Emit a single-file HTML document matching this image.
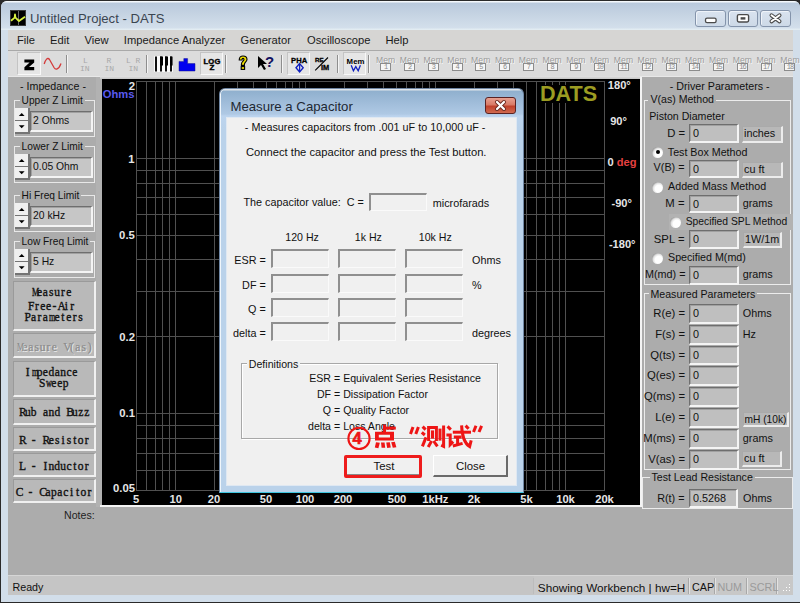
<!DOCTYPE html><html><head><meta charset="utf-8"><title>DATS</title><style>*{margin:0;padding:0}html,body{width:800px;height:603px;overflow:hidden;background:#2a2a2a}
.t{position:absolute;white-space:pre;font-family:"Liberation Sans",sans-serif}</style></head><body><div style="position:absolute;left:0;top:0;width:800px;height:603px;background:#2a2a2a"></div>
<div style="position:absolute;left:1px;top:1px;width:799px;height:601px;background:#d2deea;border-radius:6px 6px 0 0"></div>
<div style="position:absolute;left:1px;top:1px;width:799px;height:29px;background:linear-gradient(#f4f8fb 0px,#f4f8fb 1px,#b9c9dc 2px,#c6d4e3 14px,#d3dfeb 27px,#e2ecf2 28px,#e2ecf2 30px);border-radius:6px 6px 0 0"></div>
<svg style="position:absolute;left:10px;top:10px" width="16" height="16" viewBox="0 0 16 16">
<rect x="0.5" y="0.5" width="15" height="15" fill="#000" stroke="#3a3a3a" stroke-width="1"/><line x1="8.5" y1="1" x2="8.5" y2="15" stroke="#6a6a6a" stroke-width="1"/>
<polyline points="1,10.7 4.7,7.6 5,4.4 5.4,7.6 9,11 15,6.7" fill="none" stroke="#d8f040" stroke-width="1.8" stroke-linejoin="round"/></svg>
<div class="t" style="left:30.0px;top:12.1px;font-size:13.1px;line-height:13.1px;color:#3b4550;font-weight:normal;font-family:'Liberation Sans', sans-serif;">Untitled Project - DATS</div>
<div style="position:absolute;left:695px;top:10px;width:31px;height:17px;box-sizing:border-box;border:1px solid #8494ab;border-radius:3px;background:linear-gradient(#d9e3ef,#cdd9e7);box-shadow:inset 1px 1px 0 #eef3f9"></div>
<div style="position:absolute;left:728px;top:10px;width:30px;height:17px;box-sizing:border-box;border:1px solid #8494ab;border-radius:3px;background:linear-gradient(#d9e3ef,#cdd9e7);box-shadow:inset 1px 1px 0 #eef3f9"></div>
<div style="position:absolute;left:760px;top:10px;width:31px;height:17px;box-sizing:border-box;border:1px solid #8494ab;border-radius:3px;background:linear-gradient(#d9e3ef,#cdd9e7);box-shadow:inset 1px 1px 0 #eef3f9"></div>
<svg style="position:absolute;left:0;top:0" width="800" height="30">
<rect x="705.5" y="18.2" width="10.6" height="4.4" rx="1.6" fill="#fff" stroke="#4a4a4a" stroke-width="1.3"/>
<rect x="737.4" y="14.6" width="11.2" height="7.4" rx="1.4" fill="#fff" stroke="#4a4a4a" stroke-width="1.4"/>
<rect x="740.6" y="17.2" width="4.8" height="2.4" fill="#4a4a4a"/>
<path d="M771.5,15.3 L779.5,21.3 M779.5,15.3 L771.5,21.3" stroke="#4a4a4a" stroke-width="4" stroke-linecap="round"/>
<path d="M771.5,15.3 L779.5,21.3 M779.5,15.3 L771.5,21.3" stroke="#fff" stroke-width="1.9" stroke-linecap="round"/>
</svg>
<div style="position:absolute;left:8px;top:30px;width:785px;height:20px;background:#d6d5d3"></div>
<div style="position:absolute;left:8px;top:50px;width:785px;height:1px;background:#a9a9a9"></div>
<div class="t" style="left:17.0px;top:34.5px;font-size:11.2px;line-height:11.2px;color:#1a1a1a;font-weight:normal;font-family:'Liberation Sans', sans-serif;">File</div>
<div class="t" style="left:50.0px;top:34.5px;font-size:11.2px;line-height:11.2px;color:#1a1a1a;font-weight:normal;font-family:'Liberation Sans', sans-serif;">Edit</div>
<div class="t" style="left:84.5px;top:34.5px;font-size:11.2px;line-height:11.2px;color:#1a1a1a;font-weight:normal;font-family:'Liberation Sans', sans-serif;">View</div>
<div class="t" style="left:123.8px;top:34.5px;font-size:11.2px;line-height:11.2px;color:#1a1a1a;font-weight:normal;font-family:'Liberation Sans', sans-serif;">Impedance Analyzer</div>
<div class="t" style="left:240.5px;top:34.5px;font-size:11.2px;line-height:11.2px;color:#1a1a1a;font-weight:normal;font-family:'Liberation Sans', sans-serif;">Generator</div>
<div class="t" style="left:307.0px;top:34.5px;font-size:11.2px;line-height:11.2px;color:#1a1a1a;font-weight:normal;font-family:'Liberation Sans', sans-serif;">Oscilloscope</div>
<div class="t" style="left:385.5px;top:34.5px;font-size:11.2px;line-height:11.2px;color:#1a1a1a;font-weight:normal;font-family:'Liberation Sans', sans-serif;">Help</div>
<div style="position:absolute;left:8px;top:51px;width:785px;height:25px;background:#dcdcdc"></div>
<div style="position:absolute;left:8px;top:76px;width:785px;height:1px;background:#e8e8e8"></div>
<div style="position:absolute;left:66px;top:55px;width:1px;height:18px;background:#8e8e8e"></div>
<div style="position:absolute;left:67px;top:55px;width:1px;height:18px;background:#f4f4f4"></div>
<div style="position:absolute;left:146px;top:55px;width:1px;height:18px;background:#8e8e8e"></div>
<div style="position:absolute;left:147px;top:55px;width:1px;height:18px;background:#f4f4f4"></div>
<div style="position:absolute;left:225px;top:55px;width:1px;height:18px;background:#8e8e8e"></div>
<div style="position:absolute;left:226px;top:55px;width:1px;height:18px;background:#f4f4f4"></div>
<div style="position:absolute;left:281px;top:55px;width:1px;height:18px;background:#8e8e8e"></div>
<div style="position:absolute;left:282px;top:55px;width:1px;height:18px;background:#f4f4f4"></div>
<div style="position:absolute;left:337px;top:55px;width:1px;height:18px;background:#8e8e8e"></div>
<div style="position:absolute;left:338px;top:55px;width:1px;height:18px;background:#f4f4f4"></div>
<div style="position:absolute;left:368px;top:55px;width:1px;height:18px;background:#8e8e8e"></div>
<div style="position:absolute;left:369px;top:55px;width:1px;height:18px;background:#f4f4f4"></div>
<div style="position:absolute;left:17px;top:52px;width:24px;height:23px;background:#e6e6e6;border-top:1px solid #c4c4c4;border-left:1px solid #c4c4c4;border-right:1px solid #f8f8f8;border-bottom:1px solid #f8f8f8;box-sizing:border-box"></div>
<div style="position:absolute;left:200px;top:52px;width:23px;height:23px;background:#e6e6e6;border-top:1px solid #c4c4c4;border-left:1px solid #c4c4c4;border-right:1px solid #f8f8f8;border-bottom:1px solid #f8f8f8;box-sizing:border-box"></div>
<div style="position:absolute;left:287px;top:52px;width:23px;height:23px;background:#e6e6e6;border-top:1px solid #c4c4c4;border-left:1px solid #c4c4c4;border-right:1px solid #f8f8f8;border-bottom:1px solid #f8f8f8;box-sizing:border-box"></div>
<div style="position:absolute;left:343px;top:52px;width:23px;height:23px;background:#e6e6e6;border-top:1px solid #c4c4c4;border-left:1px solid #c4c4c4;border-right:1px solid #f8f8f8;border-bottom:1px solid #f8f8f8;box-sizing:border-box"></div>
<svg style="position:absolute;left:0;top:0" width="100" height="80">
<path d="M24.4,59.4 H34.2 V62.4 L29,67 H34.2 V70.2 H24.4 V67.2 L29.6,62.6 H24.4 Z" fill="#000"/>
<path d="M44.2,64 C45.5,59.5 47.5,57 49.5,59.5 L54,67.5 C55.5,70 58.5,70 61,63.4" fill="none" stroke="#d43a3a" stroke-width="1.3"/>
</svg>
<div class="t" style="left:83px;top:57px;font:8px/8px 'Liberation Mono', monospace;color:#a8a8a8">L</div>
<div class="t" style="left:80px;top:65px;font:8px/8px 'Liberation Mono', monospace;color:#a8a8a8">IN</div>
<div class="t" style="left:106.5px;top:57px;font:8px/8px 'Liberation Mono', monospace;color:#a8a8a8">R</div>
<div class="t" style="left:104.5px;top:65px;font:8px/8px 'Liberation Mono', monospace;color:#a8a8a8">IN</div>
<div class="t" style="left:126px;top:57px;font:8px/8px 'Liberation Mono', monospace;color:#a8a8a8">L R</div>
<div class="t" style="left:128.5px;top:65px;font:8px/8px 'Liberation Mono', monospace;color:#a8a8a8">IN</div>
<svg style="position:absolute;left:0;top:0" width="260" height="80">
<rect x="154" y="56" width="19" height="16" fill="#fafafa"/>
<rect x="155" y="56.5" width="2" height="15" fill="#111"/><rect x="160" y="56.5" width="2" height="15" fill="#111"/><rect x="165" y="56.5" width="2" height="15" fill="#111"/><rect x="170" y="56.5" width="2" height="15" fill="#111"/>
<rect x="160" y="56.5" width="3" height="9" fill="#000"/><rect x="165" y="56.5" width="3" height="9" fill="#000"/><rect x="170" y="56.5" width="2.6" height="9" fill="#000"/>
<path d="M179,71 V61.4 H183.8 V58.6 H187.6 V63.6 H195 V71 Z" fill="#0000f0" stroke="#1a1a8a" stroke-width="0.5"/>
</svg>
<div class="t" style="left:203.5px;top:57.6px;font:bold 7.6px/7.6px 'Liberation Sans', sans-serif;color:#000;letter-spacing:0.2px;-webkit-text-stroke:0.4px #000">LOG</div>
<div class="t" style="left:209.5px;top:63.8px;font:bold 8px/8px 'Liberation Sans', sans-serif;color:#000;-webkit-text-stroke:0.4px #000">Z</div>
<svg style="position:absolute;left:236px;top:55px" width="14" height="16" viewBox="0 0 14 16">
<path d="M3.2,5 C3.2,2 5,1 7,1 C9.5,1 11,2.6 11,4.6 C11,6.6 8.4,7.4 8.4,9.6 V10.4 H5.4 V9.2 C5.4,6.6 8,6 8,4.6 C8,3.8 7.6,3.4 7,3.4 C6.3,3.4 6,4 6,5 Z" fill="#f0e000" stroke="#000" stroke-width="1.1"/>
<rect x="5.2" y="11.6" width="3.4" height="2.8" fill="#f0e000" stroke="#000" stroke-width="1.1"/></svg>
<svg style="position:absolute;left:257px;top:55px" width="12" height="16" viewBox="0 0 12 16">
<path d="M1,1 L1,13 L4,10 L7,15 L9,14 L6,9 L10,9 Z" fill="#000"/></svg>
<div class="t" style="left:265px;top:53px;font:bold 15px/18px 'Liberation Sans', sans-serif;color:#101060">?</div>
<div class="t" style="left:291px;top:56.6px;font:bold 7.6px/7.6px 'Liberation Sans', sans-serif;color:#000;letter-spacing:0.1px;-webkit-text-stroke:0.3px #000">PHA</div>
<svg style="position:absolute;left:0;top:0" width="370" height="80">
<path d="M299.6,63.6 L303.2,67.8 L299.6,72 L296,67.8 Z" fill="none" stroke="#1020c0" stroke-width="1.4"/><line x1="299.6" y1="64" x2="299.6" y2="71.6" stroke="#1020c0" stroke-width="1.3"/>
<line x1="315.2" y1="70.4" x2="328" y2="57.5" stroke="#000" stroke-width="1.1"/>
<polyline points="351.2,65.2 353.4,70.8 355.8,66.6 358.2,70.8 360.4,65.2" fill="none" stroke="#1020c0" stroke-width="1.3"/>
</svg>
<div class="t" style="left:315px;top:57px;font:bold 6.2px/6.2px 'Liberation Sans', sans-serif;color:#000;-webkit-text-stroke:0.3px #000">RE</div>
<div class="t" style="left:321px;top:64.4px;font:bold 7.4px/7.4px 'Liberation Sans', sans-serif;color:#000;-webkit-text-stroke:0.3px #000">IM</div>
<div class="t" style="left:346.6px;top:57.6px;font:bold 7.8px/7.8px 'Liberation Sans', sans-serif;color:#000;letter-spacing:0.1px">Mem</div>
<div class="t" style="left:375.7px;top:56px;width:20px;text-align:center;font:8.6px/8.6px 'Liberation Sans', sans-serif;color:#9a9a9a;letter-spacing:0.1px;text-shadow:0.6px 0.6px 0 #fafafa">Mem</div>
<div style="position:absolute;left:380px;top:63px;width:11px;height:8px;border:1px solid #8c8c8c;background:#f6f6f6;box-sizing:border-box"></div>
<div class="t" style="left:375.7px;top:63.6px;width:20px;text-align:center;font:7px/7px 'Liberation Mono', monospace;color:#8a8a8a;letter-spacing:-1px">1</div>
<div class="t" style="left:399.5px;top:56px;width:20px;text-align:center;font:8.6px/8.6px 'Liberation Sans', sans-serif;color:#9a9a9a;letter-spacing:0.1px;text-shadow:0.6px 0.6px 0 #fafafa">Mem</div>
<div style="position:absolute;left:404px;top:63px;width:11px;height:8px;border:1px solid #8c8c8c;background:#f6f6f6;box-sizing:border-box"></div>
<div class="t" style="left:399.5px;top:63.6px;width:20px;text-align:center;font:7px/7px 'Liberation Mono', monospace;color:#8a8a8a;letter-spacing:-1px">2</div>
<div class="t" style="left:423.3px;top:56px;width:20px;text-align:center;font:8.6px/8.6px 'Liberation Sans', sans-serif;color:#9a9a9a;letter-spacing:0.1px;text-shadow:0.6px 0.6px 0 #fafafa">Mem</div>
<div style="position:absolute;left:428px;top:63px;width:11px;height:8px;border:1px solid #8c8c8c;background:#f6f6f6;box-sizing:border-box"></div>
<div class="t" style="left:423.3px;top:63.6px;width:20px;text-align:center;font:7px/7px 'Liberation Mono', monospace;color:#8a8a8a;letter-spacing:-1px">3</div>
<div class="t" style="left:447.0px;top:56px;width:20px;text-align:center;font:8.6px/8.6px 'Liberation Sans', sans-serif;color:#9a9a9a;letter-spacing:0.1px;text-shadow:0.6px 0.6px 0 #fafafa">Mem</div>
<div style="position:absolute;left:452px;top:63px;width:11px;height:8px;border:1px solid #8c8c8c;background:#f6f6f6;box-sizing:border-box"></div>
<div class="t" style="left:447.0px;top:63.6px;width:20px;text-align:center;font:7px/7px 'Liberation Mono', monospace;color:#8a8a8a;letter-spacing:-1px">4</div>
<div class="t" style="left:470.8px;top:56px;width:20px;text-align:center;font:8.6px/8.6px 'Liberation Sans', sans-serif;color:#9a9a9a;letter-spacing:0.1px;text-shadow:0.6px 0.6px 0 #fafafa">Mem</div>
<div style="position:absolute;left:475px;top:63px;width:11px;height:8px;border:1px solid #8c8c8c;background:#f6f6f6;box-sizing:border-box"></div>
<div class="t" style="left:470.8px;top:63.6px;width:20px;text-align:center;font:7px/7px 'Liberation Mono', monospace;color:#8a8a8a;letter-spacing:-1px">5</div>
<div class="t" style="left:494.6px;top:56px;width:20px;text-align:center;font:8.6px/8.6px 'Liberation Sans', sans-serif;color:#9a9a9a;letter-spacing:0.1px;text-shadow:0.6px 0.6px 0 #fafafa">Mem</div>
<div style="position:absolute;left:499px;top:63px;width:11px;height:8px;border:1px solid #8c8c8c;background:#f6f6f6;box-sizing:border-box"></div>
<div class="t" style="left:494.6px;top:63.6px;width:20px;text-align:center;font:7px/7px 'Liberation Mono', monospace;color:#8a8a8a;letter-spacing:-1px">6</div>
<div class="t" style="left:518.4px;top:56px;width:20px;text-align:center;font:8.6px/8.6px 'Liberation Sans', sans-serif;color:#9a9a9a;letter-spacing:0.1px;text-shadow:0.6px 0.6px 0 #fafafa">Mem</div>
<div style="position:absolute;left:523px;top:63px;width:11px;height:8px;border:1px solid #8c8c8c;background:#f6f6f6;box-sizing:border-box"></div>
<div class="t" style="left:518.4px;top:63.6px;width:20px;text-align:center;font:7px/7px 'Liberation Mono', monospace;color:#8a8a8a;letter-spacing:-1px">7</div>
<div class="t" style="left:542.2px;top:56px;width:20px;text-align:center;font:8.6px/8.6px 'Liberation Sans', sans-serif;color:#9a9a9a;letter-spacing:0.1px;text-shadow:0.6px 0.6px 0 #fafafa">Mem</div>
<div style="position:absolute;left:547px;top:63px;width:11px;height:8px;border:1px solid #8c8c8c;background:#f6f6f6;box-sizing:border-box"></div>
<div class="t" style="left:542.2px;top:63.6px;width:20px;text-align:center;font:7px/7px 'Liberation Mono', monospace;color:#8a8a8a;letter-spacing:-1px">8</div>
<div class="t" style="left:565.9px;top:56px;width:20px;text-align:center;font:8.6px/8.6px 'Liberation Sans', sans-serif;color:#9a9a9a;letter-spacing:0.1px;text-shadow:0.6px 0.6px 0 #fafafa">Mem</div>
<div style="position:absolute;left:570px;top:63px;width:11px;height:8px;border:1px solid #8c8c8c;background:#f6f6f6;box-sizing:border-box"></div>
<div class="t" style="left:565.9px;top:63.6px;width:20px;text-align:center;font:7px/7px 'Liberation Mono', monospace;color:#8a8a8a;letter-spacing:-1px">9</div>
<div class="t" style="left:589.7px;top:56px;width:20px;text-align:center;font:8.6px/8.6px 'Liberation Sans', sans-serif;color:#9a9a9a;letter-spacing:0.1px;text-shadow:0.6px 0.6px 0 #fafafa">Mem</div>
<div style="position:absolute;left:594px;top:63px;width:11px;height:8px;border:1px solid #8c8c8c;background:#f6f6f6;box-sizing:border-box"></div>
<div class="t" style="left:589.7px;top:63.6px;width:20px;text-align:center;font:7px/7px 'Liberation Mono', monospace;color:#8a8a8a;letter-spacing:-1px">10</div>
<div class="t" style="left:613.5px;top:56px;width:20px;text-align:center;font:8.6px/8.6px 'Liberation Sans', sans-serif;color:#9a9a9a;letter-spacing:0.1px;text-shadow:0.6px 0.6px 0 #fafafa">Mem</div>
<div style="position:absolute;left:618px;top:63px;width:11px;height:8px;border:1px solid #8c8c8c;background:#f6f6f6;box-sizing:border-box"></div>
<div class="t" style="left:613.5px;top:63.6px;width:20px;text-align:center;font:7px/7px 'Liberation Mono', monospace;color:#8a8a8a;letter-spacing:-1px">11</div>
<div class="t" style="left:637.3px;top:56px;width:20px;text-align:center;font:8.6px/8.6px 'Liberation Sans', sans-serif;color:#9a9a9a;letter-spacing:0.1px;text-shadow:0.6px 0.6px 0 #fafafa">Mem</div>
<div style="position:absolute;left:642px;top:63px;width:11px;height:8px;border:1px solid #8c8c8c;background:#f6f6f6;box-sizing:border-box"></div>
<div class="t" style="left:637.3px;top:63.6px;width:20px;text-align:center;font:7px/7px 'Liberation Mono', monospace;color:#8a8a8a;letter-spacing:-1px">12</div>
<div class="t" style="left:661.1px;top:56px;width:20px;text-align:center;font:8.6px/8.6px 'Liberation Sans', sans-serif;color:#9a9a9a;letter-spacing:0.1px;text-shadow:0.6px 0.6px 0 #fafafa">Mem</div>
<div style="position:absolute;left:666px;top:63px;width:11px;height:8px;border:1px solid #8c8c8c;background:#f6f6f6;box-sizing:border-box"></div>
<div class="t" style="left:661.1px;top:63.6px;width:20px;text-align:center;font:7px/7px 'Liberation Mono', monospace;color:#8a8a8a;letter-spacing:-1px">13</div>
<div class="t" style="left:684.8px;top:56px;width:20px;text-align:center;font:8.6px/8.6px 'Liberation Sans', sans-serif;color:#9a9a9a;letter-spacing:0.1px;text-shadow:0.6px 0.6px 0 #fafafa">Mem</div>
<div style="position:absolute;left:689px;top:63px;width:11px;height:8px;border:1px solid #8c8c8c;background:#f6f6f6;box-sizing:border-box"></div>
<div class="t" style="left:684.8px;top:63.6px;width:20px;text-align:center;font:7px/7px 'Liberation Mono', monospace;color:#8a8a8a;letter-spacing:-1px">14</div>
<div class="t" style="left:708.6px;top:56px;width:20px;text-align:center;font:8.6px/8.6px 'Liberation Sans', sans-serif;color:#9a9a9a;letter-spacing:0.1px;text-shadow:0.6px 0.6px 0 #fafafa">Mem</div>
<div style="position:absolute;left:713px;top:63px;width:11px;height:8px;border:1px solid #8c8c8c;background:#f6f6f6;box-sizing:border-box"></div>
<div class="t" style="left:708.6px;top:63.6px;width:20px;text-align:center;font:7px/7px 'Liberation Mono', monospace;color:#8a8a8a;letter-spacing:-1px">15</div>
<div class="t" style="left:732.4px;top:56px;width:20px;text-align:center;font:8.6px/8.6px 'Liberation Sans', sans-serif;color:#9a9a9a;letter-spacing:0.1px;text-shadow:0.6px 0.6px 0 #fafafa">Mem</div>
<div style="position:absolute;left:737px;top:63px;width:11px;height:8px;border:1px solid #8c8c8c;background:#f6f6f6;box-sizing:border-box"></div>
<div class="t" style="left:732.4px;top:63.6px;width:20px;text-align:center;font:7px/7px 'Liberation Mono', monospace;color:#8a8a8a;letter-spacing:-1px">16</div>
<div class="t" style="left:756.2px;top:56px;width:20px;text-align:center;font:8.6px/8.6px 'Liberation Sans', sans-serif;color:#9a9a9a;letter-spacing:0.1px;text-shadow:0.6px 0.6px 0 #fafafa">Mem</div>
<div style="position:absolute;left:761px;top:63px;width:11px;height:8px;border:1px solid #8c8c8c;background:#f6f6f6;box-sizing:border-box"></div>
<div class="t" style="left:756.2px;top:63.6px;width:20px;text-align:center;font:7px/7px 'Liberation Mono', monospace;color:#8a8a8a;letter-spacing:-1px">17</div>
<div class="t" style="left:780.0px;top:56px;width:20px;text-align:center;font:8.6px/8.6px 'Liberation Sans', sans-serif;color:#9a9a9a;letter-spacing:0.1px;text-shadow:0.6px 0.6px 0 #fafafa">Mem</div>
<div style="position:absolute;left:784px;top:63px;width:11px;height:8px;border:1px solid #8c8c8c;background:#f6f6f6;box-sizing:border-box"></div>
<div class="t" style="left:780.0px;top:63.6px;width:20px;text-align:center;font:7px/7px 'Liberation Mono', monospace;color:#8a8a8a;letter-spacing:-1px">18</div>
<div style="position:absolute;left:8px;top:77px;width:785px;height:498px;background:#acacac"></div>
<div class="t" style="left:20.0px;top:81.1px;font-size:10.7px;line-height:10.7px;color:#111;font-weight:normal;font-family:'Liberation Sans', sans-serif;">- Impedance -</div>
<div style="position:absolute;left:14px;top:100px;width:81px;height:37px;border:1px solid #e8e8e8;box-sizing:border-box"></div>
<div class="t" style="left:21.6px;top:96.4px;font-size:10.2px;line-height:10.2px;color:#111;font-weight:normal;font-family:'Liberation Sans', sans-serif;background:#acacac;padding:0 2px;margin-left:-2px">Upper Z Limit</div>
<div style="position:absolute;left:15px;top:108px;width:15px;height:12.5px;background:#f0f0f0;border-right:2px solid #747474;border-bottom:1.5px solid #747474;box-sizing:border-box"></div>
<div style="position:absolute;left:15px;top:120.5px;width:15px;height:13px;background:#f0f0f0;border-right:2px solid #747474;border-bottom:2px solid #747474;box-sizing:border-box"></div>
<svg style="position:absolute;left:15px;top:108px" width="15" height="26"><path d="M3.8,8 L9.6,8 L6.7,5 Z" fill="#000"/><path d="M3.8,17.2 L9.6,17.2 L6.7,20.2 Z" fill="#000"/></svg>
<div style="position:absolute;left:30px;top:111px;width:63px;height:21px;background:#c6c6c6;border-top:1px solid #6e6e6e;border-left:1px solid #6e6e6e;border-bottom:2px solid #f4f4f4;border-right:2px solid #f4f4f4;box-shadow:inset 1px 1px 0 #a0a0a0;box-sizing:border-box"></div>
<div class="t" style="left:33.0px;top:116.2px;font-size:10.35px;line-height:10.35px;color:#111;font-weight:normal;font-family:'Liberation Sans', sans-serif;">2 Ohms</div>
<div style="position:absolute;left:14px;top:146px;width:81px;height:37px;border:1px solid #e8e8e8;box-sizing:border-box"></div>
<div class="t" style="left:21.6px;top:142.4px;font-size:10.2px;line-height:10.2px;color:#111;font-weight:normal;font-family:'Liberation Sans', sans-serif;background:#acacac;padding:0 2px;margin-left:-2px">Lower Z Limit</div>
<div style="position:absolute;left:15px;top:154px;width:15px;height:12.5px;background:#f0f0f0;border-right:2px solid #747474;border-bottom:1.5px solid #747474;box-sizing:border-box"></div>
<div style="position:absolute;left:15px;top:166.5px;width:15px;height:13px;background:#f0f0f0;border-right:2px solid #747474;border-bottom:2px solid #747474;box-sizing:border-box"></div>
<svg style="position:absolute;left:15px;top:154px" width="15" height="26"><path d="M3.8,8 L9.6,8 L6.7,5 Z" fill="#000"/><path d="M3.8,17.2 L9.6,17.2 L6.7,20.2 Z" fill="#000"/></svg>
<div style="position:absolute;left:30px;top:157px;width:63px;height:21px;background:#c6c6c6;border-top:1px solid #6e6e6e;border-left:1px solid #6e6e6e;border-bottom:2px solid #f4f4f4;border-right:2px solid #f4f4f4;box-shadow:inset 1px 1px 0 #a0a0a0;box-sizing:border-box"></div>
<div class="t" style="left:33.0px;top:162.2px;font-size:10.35px;line-height:10.35px;color:#111;font-weight:normal;font-family:'Liberation Sans', sans-serif;">0.05 Ohm</div>
<div style="position:absolute;left:14px;top:195px;width:81px;height:37px;border:1px solid #e8e8e8;box-sizing:border-box"></div>
<div class="t" style="left:21.6px;top:191.4px;font-size:10.2px;line-height:10.2px;color:#111;font-weight:normal;font-family:'Liberation Sans', sans-serif;background:#acacac;padding:0 2px;margin-left:-2px">Hi Freq Limit</div>
<div style="position:absolute;left:15px;top:203px;width:15px;height:12.5px;background:#f0f0f0;border-right:2px solid #747474;border-bottom:1.5px solid #747474;box-sizing:border-box"></div>
<div style="position:absolute;left:15px;top:215.5px;width:15px;height:13px;background:#f0f0f0;border-right:2px solid #747474;border-bottom:2px solid #747474;box-sizing:border-box"></div>
<svg style="position:absolute;left:15px;top:203px" width="15" height="26"><path d="M3.8,8 L9.6,8 L6.7,5 Z" fill="#000"/><path d="M3.8,17.2 L9.6,17.2 L6.7,20.2 Z" fill="#000"/></svg>
<div style="position:absolute;left:30px;top:206px;width:63px;height:21px;background:#c6c6c6;border-top:1px solid #6e6e6e;border-left:1px solid #6e6e6e;border-bottom:2px solid #f4f4f4;border-right:2px solid #f4f4f4;box-shadow:inset 1px 1px 0 #a0a0a0;box-sizing:border-box"></div>
<div class="t" style="left:33.0px;top:211.2px;font-size:10.35px;line-height:10.35px;color:#111;font-weight:normal;font-family:'Liberation Sans', sans-serif;">20 kHz</div>
<div style="position:absolute;left:14px;top:241px;width:81px;height:37px;border:1px solid #e8e8e8;box-sizing:border-box"></div>
<div class="t" style="left:21.6px;top:237.4px;font-size:10.2px;line-height:10.2px;color:#111;font-weight:normal;font-family:'Liberation Sans', sans-serif;background:#acacac;padding:0 2px;margin-left:-2px">Low Freq Limit</div>
<div style="position:absolute;left:15px;top:249px;width:15px;height:12.5px;background:#f0f0f0;border-right:2px solid #747474;border-bottom:1.5px solid #747474;box-sizing:border-box"></div>
<div style="position:absolute;left:15px;top:261.5px;width:15px;height:13px;background:#f0f0f0;border-right:2px solid #747474;border-bottom:2px solid #747474;box-sizing:border-box"></div>
<svg style="position:absolute;left:15px;top:249px" width="15" height="26"><path d="M3.8,8 L9.6,8 L6.7,5 Z" fill="#000"/><path d="M3.8,17.2 L9.6,17.2 L6.7,20.2 Z" fill="#000"/></svg>
<div style="position:absolute;left:30px;top:252px;width:63px;height:21px;background:#c6c6c6;border-top:1px solid #6e6e6e;border-left:1px solid #6e6e6e;border-bottom:2px solid #f4f4f4;border-right:2px solid #f4f4f4;box-shadow:inset 1px 1px 0 #a0a0a0;box-sizing:border-box"></div>
<div class="t" style="left:33.0px;top:257.2px;font-size:10.35px;line-height:10.35px;color:#111;font-weight:normal;font-family:'Liberation Sans', sans-serif;">5 Hz</div>
<div style="position:absolute;left:13px;top:281px;width:83px;height:50px;background:#b9b9b9;border-top:1px solid #9a9a9a;border-left:1px solid #9a9a9a;border-right:2px solid #f0f0f0;border-bottom:2px solid #f0f0f0;box-sizing:border-box"></div>
<div class="t" style="left:30.6px;top:286.4px;font:11.5px/11.5px 'Liberation Serif', serif;color:#111;-webkit-text-stroke:0.35px #111;transform:scaleY(1.12);transform-origin:0 0;"><span style="display:inline-block;width:5.9px;text-align:center;transform:scaleX(0.7);">M</span><span style="display:inline-block;width:5.9px;text-align:center;">e</span><span style="display:inline-block;width:5.9px;text-align:center;">a</span><span style="display:inline-block;width:5.9px;text-align:center;">s</span><span style="display:inline-block;width:5.9px;text-align:center;">u</span><span style="display:inline-block;width:5.9px;text-align:center;">r</span><span style="display:inline-block;width:5.9px;text-align:center;">e</span></div>
<div class="t" style="left:28.0px;top:299.7px;font:11.5px/11.5px 'Liberation Serif', serif;color:#111;-webkit-text-stroke:0.35px #111;transform:scaleY(1.12);transform-origin:0 0;"><span style="display:inline-block;width:5.9px;text-align:center;">F</span><span style="display:inline-block;width:5.9px;text-align:center;">r</span><span style="display:inline-block;width:5.9px;text-align:center;">e</span><span style="display:inline-block;width:5.9px;text-align:center;">e</span><span style="display:inline-block;width:5.9px;text-align:center;">-</span><span style="display:inline-block;width:5.9px;text-align:center;">A</span><span style="display:inline-block;width:5.9px;text-align:center;">i</span><span style="display:inline-block;width:5.9px;text-align:center;">r</span></div>
<div class="t" style="left:24.6px;top:311.0px;font:11.5px/11.5px 'Liberation Serif', serif;color:#111;-webkit-text-stroke:0.35px #111;transform:scaleY(1.12);transform-origin:0 0;"><span style="display:inline-block;width:5.9px;text-align:center;">P</span><span style="display:inline-block;width:5.9px;text-align:center;">a</span><span style="display:inline-block;width:5.9px;text-align:center;">r</span><span style="display:inline-block;width:5.9px;text-align:center;">a</span><span style="display:inline-block;width:5.9px;text-align:center;transform:scaleX(0.7);">m</span><span style="display:inline-block;width:5.9px;text-align:center;">e</span><span style="display:inline-block;width:5.9px;text-align:center;">t</span><span style="display:inline-block;width:5.9px;text-align:center;">e</span><span style="display:inline-block;width:5.9px;text-align:center;">r</span><span style="display:inline-block;width:5.9px;text-align:center;">s</span></div>
<div style="position:absolute;left:13px;top:333px;width:83px;height:25px;background:#b9b9b9;border-top:1px solid #9a9a9a;border-left:1px solid #9a9a9a;border-right:2px solid #f0f0f0;border-bottom:2px solid #f0f0f0;box-sizing:border-box"></div>
<div class="t" style="left:16.0px;top:340.8px;font:11.5px/11.5px 'Liberation Serif', serif;color:#8a8a8a;-webkit-text-stroke:0.35px #8a8a8a;transform:scaleY(1.12);transform-origin:0 0;text-shadow:1px 1px 0 #ececec;-webkit-text-stroke:0.2px #8a8a8a"><span style="display:inline-block;width:5.9px;text-align:center;transform:scaleX(0.7);">M</span><span style="display:inline-block;width:5.9px;text-align:center;">e</span><span style="display:inline-block;width:5.9px;text-align:center;">a</span><span style="display:inline-block;width:5.9px;text-align:center;">s</span><span style="display:inline-block;width:5.9px;text-align:center;">u</span><span style="display:inline-block;width:5.9px;text-align:center;">r</span><span style="display:inline-block;width:5.9px;text-align:center;">e</span><span style="display:inline-block;width:5.9px">&nbsp;</span><span style="display:inline-block;width:5.9px;text-align:center;">V</span><span style="display:inline-block;width:5.9px;text-align:center;">(</span><span style="display:inline-block;width:5.9px;text-align:center;">a</span><span style="display:inline-block;width:5.9px;text-align:center;">s</span><span style="display:inline-block;width:5.9px;text-align:center;">)</span></div>
<div style="position:absolute;left:13px;top:361px;width:83px;height:36px;background:#b9b9b9;border-top:1px solid #9a9a9a;border-left:1px solid #9a9a9a;border-right:2px solid #f0f0f0;border-bottom:2px solid #f0f0f0;box-sizing:border-box"></div>
<div class="t" style="left:24.8px;top:365.8px;font:11.5px/11.5px 'Liberation Serif', serif;color:#111;-webkit-text-stroke:0.35px #111;transform:scaleY(1.12);transform-origin:0 0;"><span style="display:inline-block;width:5.9px;text-align:center;">I</span><span style="display:inline-block;width:5.9px;text-align:center;transform:scaleX(0.7);">m</span><span style="display:inline-block;width:5.9px;text-align:center;">p</span><span style="display:inline-block;width:5.9px;text-align:center;">e</span><span style="display:inline-block;width:5.9px;text-align:center;">d</span><span style="display:inline-block;width:5.9px;text-align:center;">a</span><span style="display:inline-block;width:5.9px;text-align:center;">n</span><span style="display:inline-block;width:5.9px;text-align:center;">c</span><span style="display:inline-block;width:5.9px;text-align:center;">e</span></div>
<div class="t" style="left:39.1px;top:377.1px;font:11.5px/11.5px 'Liberation Serif', serif;color:#111;-webkit-text-stroke:0.35px #111;transform:scaleY(1.12);transform-origin:0 0;"><span style="display:inline-block;width:5.9px;text-align:center;">S</span><span style="display:inline-block;width:5.9px;text-align:center;transform:scaleX(0.7);">w</span><span style="display:inline-block;width:5.9px;text-align:center;">e</span><span style="display:inline-block;width:5.9px;text-align:center;">e</span><span style="display:inline-block;width:5.9px;text-align:center;">p</span></div>
<div style="position:absolute;left:13px;top:399px;width:83px;height:26px;background:#b9b9b9;border-top:1px solid #9a9a9a;border-left:1px solid #9a9a9a;border-right:2px solid #f0f0f0;border-bottom:2px solid #f0f0f0;box-sizing:border-box"></div>
<div class="t" style="left:19.0px;top:406.3px;font:11.5px/11.5px 'Liberation Serif', serif;color:#111;-webkit-text-stroke:0.35px #111;transform:scaleY(1.12);transform-origin:0 0;"><span style="display:inline-block;width:5.9px;text-align:center;">R</span><span style="display:inline-block;width:5.9px;text-align:center;">u</span><span style="display:inline-block;width:5.9px;text-align:center;">b</span><span style="display:inline-block;width:5.9px">&nbsp;</span><span style="display:inline-block;width:5.9px;text-align:center;">a</span><span style="display:inline-block;width:5.9px;text-align:center;">n</span><span style="display:inline-block;width:5.9px;text-align:center;">d</span><span style="display:inline-block;width:5.9px">&nbsp;</span><span style="display:inline-block;width:5.9px;text-align:center;">B</span><span style="display:inline-block;width:5.9px;text-align:center;">u</span><span style="display:inline-block;width:5.9px;text-align:center;">z</span><span style="display:inline-block;width:5.9px;text-align:center;">z</span></div>
<div style="position:absolute;left:13px;top:427px;width:83px;height:24px;background:#b9b9b9;border-top:1px solid #9a9a9a;border-left:1px solid #9a9a9a;border-right:2px solid #f0f0f0;border-bottom:2px solid #f0f0f0;box-sizing:border-box"></div>
<div class="t" style="left:18.9px;top:434.1px;font:11.5px/11.5px 'Liberation Serif', serif;color:#111;-webkit-text-stroke:0.35px #111;transform:scaleY(1.12);transform-origin:0 0;"><span style="display:inline-block;width:5.9px;text-align:center;">R</span><span style="display:inline-block;width:5.9px">&nbsp;</span><span style="display:inline-block;width:5.9px;text-align:center;">-</span><span style="display:inline-block;width:5.9px">&nbsp;</span><span style="display:inline-block;width:5.9px;text-align:center;">R</span><span style="display:inline-block;width:5.9px;text-align:center;">e</span><span style="display:inline-block;width:5.9px;text-align:center;">s</span><span style="display:inline-block;width:5.9px;text-align:center;">i</span><span style="display:inline-block;width:5.9px;text-align:center;">s</span><span style="display:inline-block;width:5.9px;text-align:center;">t</span><span style="display:inline-block;width:5.9px;text-align:center;">o</span><span style="display:inline-block;width:5.9px;text-align:center;">r</span></div>
<div style="position:absolute;left:13px;top:453px;width:83px;height:24px;background:#b9b9b9;border-top:1px solid #9a9a9a;border-left:1px solid #9a9a9a;border-right:2px solid #f0f0f0;border-bottom:2px solid #f0f0f0;box-sizing:border-box"></div>
<div class="t" style="left:18.9px;top:460.0px;font:11.5px/11.5px 'Liberation Serif', serif;color:#111;-webkit-text-stroke:0.35px #111;transform:scaleY(1.12);transform-origin:0 0;"><span style="display:inline-block;width:5.9px;text-align:center;">L</span><span style="display:inline-block;width:5.9px">&nbsp;</span><span style="display:inline-block;width:5.9px;text-align:center;">-</span><span style="display:inline-block;width:5.9px">&nbsp;</span><span style="display:inline-block;width:5.9px;text-align:center;">I</span><span style="display:inline-block;width:5.9px;text-align:center;">n</span><span style="display:inline-block;width:5.9px;text-align:center;">d</span><span style="display:inline-block;width:5.9px;text-align:center;">u</span><span style="display:inline-block;width:5.9px;text-align:center;">c</span><span style="display:inline-block;width:5.9px;text-align:center;">t</span><span style="display:inline-block;width:5.9px;text-align:center;">o</span><span style="display:inline-block;width:5.9px;text-align:center;">r</span></div>
<div style="position:absolute;left:13px;top:479px;width:83px;height:24px;background:#b9b9b9;border-top:1px solid #9a9a9a;border-left:1px solid #9a9a9a;border-right:2px solid #f0f0f0;border-bottom:2px solid #f0f0f0;box-sizing:border-box"></div>
<div class="t" style="left:15.7px;top:485.8px;font:11.5px/11.5px 'Liberation Serif', serif;color:#111;-webkit-text-stroke:0.35px #111;transform:scaleY(1.12);transform-origin:0 0;"><span style="display:inline-block;width:5.9px;text-align:center;">C</span><span style="display:inline-block;width:5.9px">&nbsp;</span><span style="display:inline-block;width:5.9px;text-align:center;">-</span><span style="display:inline-block;width:5.9px">&nbsp;</span><span style="display:inline-block;width:5.9px;text-align:center;">C</span><span style="display:inline-block;width:5.9px;text-align:center;">a</span><span style="display:inline-block;width:5.9px;text-align:center;">p</span><span style="display:inline-block;width:5.9px;text-align:center;">a</span><span style="display:inline-block;width:5.9px;text-align:center;">c</span><span style="display:inline-block;width:5.9px;text-align:center;">i</span><span style="display:inline-block;width:5.9px;text-align:center;">t</span><span style="display:inline-block;width:5.9px;text-align:center;">o</span><span style="display:inline-block;width:5.9px;text-align:center;">r</span></div>
<div class="t" style="left:64.0px;top:509.6px;font-size:10.6px;line-height:10.6px;color:#222;font-weight:normal;font-family:'Liberation Sans', sans-serif;">Notes:</div>
<div style="position:absolute;left:96px;top:77px;width:6px;height:430px;background:#b2b2b2"></div>
<div style="position:absolute;left:100px;top:505px;width:542px;height:2px;background:#f4f4f4"></div>
<div style="position:absolute;left:640px;top:77px;width:2px;height:430px;background:#f4f4f4"></div>
<div style="position:absolute;left:100px;top:76px;width:540px;height:3px;background:linear-gradient(#e4e4e4,#c4c4c4)"></div>
<div style="position:absolute;left:102px;top:79px;width:538px;height:426px;background:#000"></div>
<svg style="position:absolute;left:0;top:0" width="800" height="603"><line x1="136.5" y1="81" x2="136.5" y2="490" stroke="#505050" stroke-width="1"/><line x1="146.5" y1="81" x2="146.5" y2="490" stroke="#505050" stroke-width="1"/><line x1="155.5" y1="81" x2="155.5" y2="490" stroke="#505050" stroke-width="1"/><line x1="162.5" y1="81" x2="162.5" y2="490" stroke="#505050" stroke-width="1"/><line x1="169.5" y1="81" x2="169.5" y2="490" stroke="#505050" stroke-width="1"/><line x1="175.5" y1="81" x2="175.5" y2="490" stroke="#505050" stroke-width="1"/><line x1="214.5" y1="81" x2="214.5" y2="490" stroke="#505050" stroke-width="1"/><line x1="237.5" y1="81" x2="237.5" y2="490" stroke="#505050" stroke-width="1"/><line x1="253.5" y1="81" x2="253.5" y2="490" stroke="#505050" stroke-width="1"/><line x1="266.5" y1="81" x2="266.5" y2="490" stroke="#505050" stroke-width="1"/><line x1="276.5" y1="81" x2="276.5" y2="490" stroke="#505050" stroke-width="1"/><line x1="285.5" y1="81" x2="285.5" y2="490" stroke="#505050" stroke-width="1"/><line x1="292.5" y1="81" x2="292.5" y2="490" stroke="#505050" stroke-width="1"/><line x1="299.5" y1="81" x2="299.5" y2="490" stroke="#505050" stroke-width="1"/><line x1="305.5" y1="81" x2="305.5" y2="490" stroke="#505050" stroke-width="1"/><line x1="344.5" y1="81" x2="344.5" y2="490" stroke="#505050" stroke-width="1"/><line x1="367.5" y1="81" x2="367.5" y2="490" stroke="#505050" stroke-width="1"/><line x1="383.5" y1="81" x2="383.5" y2="490" stroke="#505050" stroke-width="1"/><line x1="396.5" y1="81" x2="396.5" y2="490" stroke="#505050" stroke-width="1"/><line x1="406.5" y1="81" x2="406.5" y2="490" stroke="#505050" stroke-width="1"/><line x1="415.5" y1="81" x2="415.5" y2="490" stroke="#505050" stroke-width="1"/><line x1="422.5" y1="81" x2="422.5" y2="490" stroke="#505050" stroke-width="1"/><line x1="429.5" y1="81" x2="429.5" y2="490" stroke="#505050" stroke-width="1"/><line x1="435.5" y1="81" x2="435.5" y2="490" stroke="#505050" stroke-width="1"/><line x1="474.5" y1="81" x2="474.5" y2="490" stroke="#505050" stroke-width="1"/><line x1="497.5" y1="81" x2="497.5" y2="490" stroke="#505050" stroke-width="1"/><line x1="513.5" y1="81" x2="513.5" y2="490" stroke="#505050" stroke-width="1"/><line x1="526.5" y1="81" x2="526.5" y2="490" stroke="#505050" stroke-width="1"/><line x1="536.5" y1="81" x2="536.5" y2="490" stroke="#505050" stroke-width="1"/><line x1="545.5" y1="81" x2="545.5" y2="490" stroke="#505050" stroke-width="1"/><line x1="552.5" y1="81" x2="552.5" y2="490" stroke="#505050" stroke-width="1"/><line x1="559.5" y1="81" x2="559.5" y2="490" stroke="#505050" stroke-width="1"/><line x1="565.5" y1="81" x2="565.5" y2="490" stroke="#505050" stroke-width="1"/><line x1="604.5" y1="81" x2="604.5" y2="490" stroke="#505050" stroke-width="1"/><line x1="136" y1="81.5" x2="605" y2="81.5" stroke="#505050" stroke-width="1"/><line x1="136" y1="158.5" x2="605" y2="158.5" stroke="#505050" stroke-width="1"/><line x1="136" y1="170.5" x2="605" y2="170.5" stroke="#505050" stroke-width="1"/><line x1="136" y1="183.5" x2="605" y2="183.5" stroke="#505050" stroke-width="1"/><line x1="136" y1="197.5" x2="605" y2="197.5" stroke="#505050" stroke-width="1"/><line x1="136" y1="214.5" x2="605" y2="214.5" stroke="#505050" stroke-width="1"/><line x1="136" y1="235.5" x2="605" y2="235.5" stroke="#505050" stroke-width="1"/><line x1="136" y1="259.5" x2="605" y2="259.5" stroke="#505050" stroke-width="1"/><line x1="136" y1="291.5" x2="605" y2="291.5" stroke="#505050" stroke-width="1"/><line x1="136" y1="336.5" x2="605" y2="336.5" stroke="#505050" stroke-width="1"/><line x1="136" y1="413.5" x2="605" y2="413.5" stroke="#505050" stroke-width="1"/><line x1="136" y1="425.5" x2="605" y2="425.5" stroke="#505050" stroke-width="1"/><line x1="136" y1="438.5" x2="605" y2="438.5" stroke="#505050" stroke-width="1"/><line x1="136" y1="453.5" x2="605" y2="453.5" stroke="#505050" stroke-width="1"/><line x1="136" y1="470.5" x2="605" y2="470.5" stroke="#505050" stroke-width="1"/><line x1="136" y1="490.5" x2="605" y2="490.5" stroke="#505050" stroke-width="1"/></svg>
<div class="t" style="right:665.0px;top:80.5px;font-size:11.3px;line-height:11.3px;color:#e6e6e6;font-weight:bold;font-family:'Liberation Sans', sans-serif;text-align:right;">2</div>
<div class="t" style="right:665.5px;top:88.8px;font-size:11.2px;line-height:11.2px;color:#5a5aee;font-weight:bold;font-family:'Liberation Sans', sans-serif;text-align:right;">Ohms</div>
<div class="t" style="right:665.5px;top:154.0px;font-size:11.3px;line-height:11.3px;color:#e6e6e6;font-weight:bold;font-family:'Liberation Sans', sans-serif;text-align:right;">1</div>
<div class="t" style="right:665.2px;top:229.7px;font-size:11.3px;line-height:11.3px;color:#e6e6e6;font-weight:bold;font-family:'Liberation Sans', sans-serif;text-align:right;">0.5</div>
<div class="t" style="right:665.0px;top:331.5px;font-size:11.3px;line-height:11.3px;color:#e6e6e6;font-weight:bold;font-family:'Liberation Sans', sans-serif;text-align:right;">0.2</div>
<div class="t" style="right:665.0px;top:408.0px;font-size:11.3px;line-height:11.3px;color:#e6e6e6;font-weight:bold;font-family:'Liberation Sans', sans-serif;text-align:right;">0.1</div>
<div class="t" style="right:665.0px;top:482.9px;font-size:11.3px;line-height:11.3px;color:#e6e6e6;font-weight:bold;font-family:'Liberation Sans', sans-serif;text-align:right;">0.05</div>
<div class="t" style="left:-64.0px;width:400px;text-align:center;top:493.7px;font-size:11.2px;line-height:11.2px;color:#e6e6e6;font-weight:bold;font-family:'Liberation Sans', sans-serif;">5</div>
<div class="t" style="left:-24.3px;width:400px;text-align:center;top:493.7px;font-size:11.2px;line-height:11.2px;color:#e6e6e6;font-weight:bold;font-family:'Liberation Sans', sans-serif;">10</div>
<div class="t" style="left:14.0px;width:400px;text-align:center;top:493.7px;font-size:11.2px;line-height:11.2px;color:#e6e6e6;font-weight:bold;font-family:'Liberation Sans', sans-serif;">20</div>
<div class="t" style="left:66.0px;width:400px;text-align:center;top:493.7px;font-size:11.2px;line-height:11.2px;color:#e6e6e6;font-weight:bold;font-family:'Liberation Sans', sans-serif;">50</div>
<div class="t" style="left:105.0px;width:400px;text-align:center;top:493.7px;font-size:11.2px;line-height:11.2px;color:#e6e6e6;font-weight:bold;font-family:'Liberation Sans', sans-serif;">100</div>
<div class="t" style="left:143.0px;width:400px;text-align:center;top:493.7px;font-size:11.2px;line-height:11.2px;color:#e6e6e6;font-weight:bold;font-family:'Liberation Sans', sans-serif;">200</div>
<div class="t" style="left:197.0px;width:400px;text-align:center;top:493.7px;font-size:11.2px;line-height:11.2px;color:#e6e6e6;font-weight:bold;font-family:'Liberation Sans', sans-serif;">500</div>
<div class="t" style="left:235.4px;width:400px;text-align:center;top:493.7px;font-size:11.2px;line-height:11.2px;color:#e6e6e6;font-weight:bold;font-family:'Liberation Sans', sans-serif;">1kHz</div>
<div class="t" style="left:274.0px;width:400px;text-align:center;top:493.7px;font-size:11.2px;line-height:11.2px;color:#e6e6e6;font-weight:bold;font-family:'Liberation Sans', sans-serif;">2k</div>
<div class="t" style="left:326.5px;width:400px;text-align:center;top:493.7px;font-size:11.2px;line-height:11.2px;color:#e6e6e6;font-weight:bold;font-family:'Liberation Sans', sans-serif;">5k</div>
<div class="t" style="left:365.5px;width:400px;text-align:center;top:493.7px;font-size:11.2px;line-height:11.2px;color:#e6e6e6;font-weight:bold;font-family:'Liberation Sans', sans-serif;">10k</div>
<div class="t" style="left:404.5px;width:400px;text-align:center;top:493.7px;font-size:11.2px;line-height:11.2px;color:#e6e6e6;font-weight:bold;font-family:'Liberation Sans', sans-serif;">20k</div>
<div style="position:absolute;left:539px;top:85px;width:60px;height:18px;background:#000"></div>
<div class="t" style="left:540.0px;top:83.4px;font-size:21.6px;line-height:21.6px;color:#9c9c22;font-weight:bold;font-family:'Liberation Sans', sans-serif;">DATS</div>
<div class="t" style="left:607.8px;top:80.3px;font-size:11.1px;line-height:11.1px;color:#e6e6e6;font-weight:bold;font-family:'Liberation Sans', sans-serif;">180°</div>
<div class="t" style="left:610.2px;top:116.1px;font-size:11.1px;line-height:11.1px;color:#e6e6e6;font-weight:bold;font-family:'Liberation Sans', sans-serif;">90°</div>
<div class="t" style="left:607.5px;top:156.6px;font-size:11.1px;line-height:11.1px;color:#e6e6e6;font-weight:bold;font-family:'Liberation Sans', sans-serif;">0 <span style="color:#e84040">deg</span></div>
<div class="t" style="left:611.5px;top:198.3px;font-size:11.1px;line-height:11.1px;color:#e6e6e6;font-weight:bold;font-family:'Liberation Sans', sans-serif;">-90°</div>
<div class="t" style="left:608.9px;top:238.9px;font-size:11.1px;line-height:11.1px;color:#e6e6e6;font-weight:bold;font-family:'Liberation Sans', sans-serif;">-180°</div>
<div style="position:absolute;left:219px;top:88px;width:305px;height:405px;box-sizing:border-box;border:1px solid #6f86a3;border-bottom:1px solid #3fc6e0;border-radius:6px 6px 0 0;background:linear-gradient(#dfe5ea 0px,#dfe5ea 1px,#90b0ce 2px,#a3bfdc 16px,#afc9e4 25px,#bcd4ee 27px,#bad2ea 40px,#bad2ea 100%);box-shadow:inset 1px 0 0 #f0f6fb"></div>
<div style="position:absolute;left:226px;top:117px;width:291px;height:369px;background:#f0f0f0;border:1px solid #dfe8f2;box-sizing:border-box"></div>
<div style="position:absolute;left:227px;top:118px;width:289px;height:367px;background:#f0f0f0"></div>
<div class="t" style="left:230.4px;top:99.7px;font-size:13.2px;line-height:13.2px;color:#1e2833;font-weight:normal;font-family:'Liberation Sans', sans-serif;">Measure a Capacitor</div>
<div style="position:absolute;left:485px;top:97px;width:31px;height:17px;box-sizing:border-box;border:1px solid #5a2222;border-radius:3px;background:linear-gradient(#e8a090 0%,#d87a66 45%,#c0402a 55%,#d06a50 100%)"></div>
<svg style="position:absolute;left:493px;top:99px" width="15" height="13" viewBox="0 0 15 13">
<path d="M4,3 L11,10 M11,3 L4,10" stroke="#6a2a20" stroke-width="4" stroke-linecap="round"/>
<path d="M4,3 L11,10 M11,3 L4,10" stroke="#fff" stroke-width="2.2" stroke-linecap="round"/></svg>
<div class="t" style="left:244.8px;top:121.8px;font-size:10.8px;line-height:10.8px;color:#111;font-weight:normal;font-family:'Liberation Sans', sans-serif;">- Measures capacitors from .001 uF to 10,000 uF -</div>
<div class="t" style="left:246.0px;top:147.2px;font-size:11.2px;line-height:11.2px;color:#111;font-weight:normal;font-family:'Liberation Sans', sans-serif;">Connect the capacitor and press the Test button.</div>
<div class="t" style="left:243.5px;top:197.4px;font-size:10.8px;line-height:10.8px;color:#111;font-weight:normal;font-family:'Liberation Sans', sans-serif;">The capacitor value:&nbsp; C =</div>
<div style="position:absolute;left:369px;top:193px;width:58px;height:18px;background:#f0f0f0;border-top:2px solid #8f8f8f;border-left:2px solid #8f8f8f;border-bottom:1px solid #fafafa;border-right:1px solid #fafafa;box-sizing:border-box"></div>
<div class="t" style="left:432.8px;top:197.6px;font-size:10.8px;line-height:10.8px;color:#111;font-weight:normal;font-family:'Liberation Sans', sans-serif;">microfarads</div>
<div class="t" style="left:285.3px;top:232.1px;font-size:10.6px;line-height:10.6px;color:#111;font-weight:normal;font-family:'Liberation Sans', sans-serif;">120 Hz</div>
<div class="t" style="left:354.8px;top:232.1px;font-size:10.6px;line-height:10.6px;color:#111;font-weight:normal;font-family:'Liberation Sans', sans-serif;">1k Hz</div>
<div class="t" style="left:418.8px;top:232.1px;font-size:10.6px;line-height:10.6px;color:#111;font-weight:normal;font-family:'Liberation Sans', sans-serif;">10k Hz</div>
<div style="position:absolute;left:271px;top:249px;width:58px;height:19px;background:#f0f0f0;border-top:2px solid #8f8f8f;border-left:2px solid #8f8f8f;border-bottom:1px solid #fafafa;border-right:1px solid #fafafa;box-sizing:border-box"></div>
<div style="position:absolute;left:338px;top:249px;width:58px;height:19px;background:#f0f0f0;border-top:2px solid #8f8f8f;border-left:2px solid #8f8f8f;border-bottom:1px solid #fafafa;border-right:1px solid #fafafa;box-sizing:border-box"></div>
<div style="position:absolute;left:405px;top:249px;width:58px;height:19px;background:#f0f0f0;border-top:2px solid #8f8f8f;border-left:2px solid #8f8f8f;border-bottom:1px solid #fafafa;border-right:1px solid #fafafa;box-sizing:border-box"></div>
<div class="t" style="right:534.2px;top:254.6px;font-size:10.8px;line-height:10.8px;color:#111;font-weight:normal;font-family:'Liberation Sans', sans-serif;text-align:right;">ESR =</div>
<div class="t" style="left:472.0px;top:254.6px;font-size:10.8px;line-height:10.8px;color:#111;font-weight:normal;font-family:'Liberation Sans', sans-serif;">Ohms</div>
<div style="position:absolute;left:271px;top:274px;width:58px;height:19px;background:#f0f0f0;border-top:2px solid #8f8f8f;border-left:2px solid #8f8f8f;border-bottom:1px solid #fafafa;border-right:1px solid #fafafa;box-sizing:border-box"></div>
<div style="position:absolute;left:338px;top:274px;width:58px;height:19px;background:#f0f0f0;border-top:2px solid #8f8f8f;border-left:2px solid #8f8f8f;border-bottom:1px solid #fafafa;border-right:1px solid #fafafa;box-sizing:border-box"></div>
<div style="position:absolute;left:405px;top:274px;width:58px;height:19px;background:#f0f0f0;border-top:2px solid #8f8f8f;border-left:2px solid #8f8f8f;border-bottom:1px solid #fafafa;border-right:1px solid #fafafa;box-sizing:border-box"></div>
<div class="t" style="right:534.2px;top:279.6px;font-size:10.8px;line-height:10.8px;color:#111;font-weight:normal;font-family:'Liberation Sans', sans-serif;text-align:right;">DF =</div>
<div class="t" style="left:472.0px;top:279.6px;font-size:10.8px;line-height:10.8px;color:#111;font-weight:normal;font-family:'Liberation Sans', sans-serif;">%</div>
<div style="position:absolute;left:271px;top:298px;width:58px;height:19px;background:#f0f0f0;border-top:2px solid #8f8f8f;border-left:2px solid #8f8f8f;border-bottom:1px solid #fafafa;border-right:1px solid #fafafa;box-sizing:border-box"></div>
<div style="position:absolute;left:338px;top:298px;width:58px;height:19px;background:#f0f0f0;border-top:2px solid #8f8f8f;border-left:2px solid #8f8f8f;border-bottom:1px solid #fafafa;border-right:1px solid #fafafa;box-sizing:border-box"></div>
<div style="position:absolute;left:405px;top:298px;width:58px;height:19px;background:#f0f0f0;border-top:2px solid #8f8f8f;border-left:2px solid #8f8f8f;border-bottom:1px solid #fafafa;border-right:1px solid #fafafa;box-sizing:border-box"></div>
<div class="t" style="right:534.2px;top:303.6px;font-size:10.8px;line-height:10.8px;color:#111;font-weight:normal;font-family:'Liberation Sans', sans-serif;text-align:right;">Q =</div>
<div style="position:absolute;left:271px;top:322px;width:58px;height:19px;background:#f0f0f0;border-top:2px solid #8f8f8f;border-left:2px solid #8f8f8f;border-bottom:1px solid #fafafa;border-right:1px solid #fafafa;box-sizing:border-box"></div>
<div style="position:absolute;left:338px;top:322px;width:58px;height:19px;background:#f0f0f0;border-top:2px solid #8f8f8f;border-left:2px solid #8f8f8f;border-bottom:1px solid #fafafa;border-right:1px solid #fafafa;box-sizing:border-box"></div>
<div style="position:absolute;left:405px;top:322px;width:58px;height:19px;background:#f0f0f0;border-top:2px solid #8f8f8f;border-left:2px solid #8f8f8f;border-bottom:1px solid #fafafa;border-right:1px solid #fafafa;box-sizing:border-box"></div>
<div class="t" style="right:534.2px;top:327.6px;font-size:10.8px;line-height:10.8px;color:#111;font-weight:normal;font-family:'Liberation Sans', sans-serif;text-align:right;">delta =</div>
<div class="t" style="left:472.0px;top:327.6px;font-size:10.8px;line-height:10.8px;color:#111;font-weight:normal;font-family:'Liberation Sans', sans-serif;">degrees</div>
<div style="position:absolute;left:241px;top:363px;width:257px;height:76px;border-top:1px solid #a8a8a8;border-left:1px solid #a8a8a8;border-right:1px solid #a8a8a8;border-bottom:1px solid #a8a8a8;box-shadow:1px 1px 0 #fff, inset 1px 1px 0 #fff;box-sizing:border-box"></div>
<div class="t" style="left:248.8px;top:358.6px;font-size:10.6px;line-height:10.6px;color:#111;font-weight:normal;font-family:'Liberation Sans', sans-serif;background:#f0f0f0;padding:0 2px;margin-left:-2px">Definitions</div>
<div class="t" style="right:469.0px;top:373.4px;font-size:10.6px;line-height:10.6px;color:#111;font-weight:normal;font-family:'Liberation Sans', sans-serif;text-align:right;">ESR</div>
<div class="t" style="left:334.0px;top:373.4px;font-size:10.6px;line-height:10.6px;color:#111;font-weight:normal;font-family:'Liberation Sans', sans-serif;">= Equivalent Series Resistance</div>
<div class="t" style="right:469.0px;top:389.4px;font-size:10.6px;line-height:10.6px;color:#111;font-weight:normal;font-family:'Liberation Sans', sans-serif;text-align:right;">DF</div>
<div class="t" style="left:334.0px;top:389.4px;font-size:10.6px;line-height:10.6px;color:#111;font-weight:normal;font-family:'Liberation Sans', sans-serif;">= Dissipation Factor</div>
<div class="t" style="right:469.0px;top:405.4px;font-size:10.6px;line-height:10.6px;color:#111;font-weight:normal;font-family:'Liberation Sans', sans-serif;text-align:right;">Q</div>
<div class="t" style="left:334.0px;top:405.4px;font-size:10.6px;line-height:10.6px;color:#111;font-weight:normal;font-family:'Liberation Sans', sans-serif;">= Quality Factor</div>
<div class="t" style="right:469.0px;top:421.4px;font-size:10.6px;line-height:10.6px;color:#111;font-weight:normal;font-family:'Liberation Sans', sans-serif;text-align:right;">delta</div>
<div class="t" style="left:334.0px;top:421.4px;font-size:10.6px;line-height:10.6px;color:#111;font-weight:normal;font-family:'Liberation Sans', sans-serif;">= Loss Angle</div>
<div style="position:absolute;left:347px;top:458px;width:72px;height:17px;background:#f0f0f0;border-bottom:1px solid #8a8a8a;box-sizing:border-box"></div>
<div style="position:absolute;left:433px;top:455px;width:75px;height:22px;background:#f0f0f0;border-top:1px solid #fff;border-left:1px solid #fff;border-right:2px solid #6a6a6a;border-bottom:2px solid #6a6a6a;box-sizing:border-box"></div>
<div class="t" style="left:373.6px;top:460.5px;font-size:11.4px;line-height:11.4px;color:#111;font-weight:normal;font-family:'Liberation Sans', sans-serif;">Test</div>
<div class="t" style="left:456.0px;top:460.5px;font-size:11.4px;line-height:11.4px;color:#111;font-weight:normal;font-family:'Liberation Sans', sans-serif;">Close</div>
<div style="position:absolute;left:344px;top:455px;width:78px;height:23px;border:3px solid #ee1c1c;border-radius:2px;box-sizing:border-box"></div>
<svg style="position:absolute;left:0;top:0" width="800" height="603">
<g fill="none" stroke="#ee1515" stroke-linecap="butt">
<circle cx="359" cy="438.4" r="10.6" stroke-width="2.1"/>
</g>
<text x="352.6" y="444.4" font-family="Liberation Sans" font-weight="bold" font-size="16.5" fill="#ee1515" stroke="#ee1515" stroke-width="0.6">4</text>
<g fill="#ee1515" stroke="none">
<rect x="383" y="424.6" width="3" height="8"/>
<rect x="384" y="426.6" width="11.8" height="3"/>
<path d="M375,431.8 H394 V440.4 H375 Z M378.8,434.8 V437.6 H390 V434.8 Z" fill-rule="evenodd"/>
<path d="M376,442.2 L379.8,442.8 L378.4,448.2 L374.8,447.6 Z"/>
<path d="M381,442.4 L384.6,442.4 L385.2,447.8 L381.6,447.8 Z"/>
<path d="M386.2,442.4 L389.8,442.2 L390.8,447.6 L387.2,448 Z"/>
<path d="M391.2,442.2 L394.8,441.8 L396.4,447.2 L392.8,447.8 Z"/>
</g>
<g fill="none" stroke="#ee1515" stroke-width="3" stroke-linecap="butt" stroke-linejoin="miter">
<path d="M410.5,434 L413,427"/><path d="M415.8,434 L418.4,427"/>
<path d="M473.5,432 L476,425.8"/><path d="M479,432 L481.6,425.8"/>
<path d="M422.6,426.6 L425.6,429.6"/><path d="M421.8,432.4 L424.8,435"/><path d="M422.4,446.4 L426,437.4"/>
<path d="M428.6,441 V427.6 H436.4 V441"/><path d="M432.5,430.4 V438.6"/>
<path d="M431.6,441 L428.2,447"/><path d="M433.6,441 L437.4,446.4"/>
<path d="M440,428.6 V440.6"/><path d="M443.6,425.4 V446.4 L441.2,445.2"/>
<path d="M447.6,426.4 L450.8,429.6"/><path d="M446.4,435 H450.2 V444.6 L453.2,441.6"/>
<path d="M452.8,432.2 H471"/><path d="M465.6,425.6 L468.6,428.8"/>
<path d="M453.8,437 H461.6"/><path d="M457.6,437 V444.4"/><path d="M452.8,446 L462.6,443.4"/>
<path d="M461.6,425.4 C462,436 464,443 469.6,446.6 L471.2,440.4"/>
</g>
</svg>
<div class="t" style="left:669.8px;top:80.8px;font-size:10.7px;line-height:10.7px;color:#111;font-weight:normal;font-family:'Liberation Sans', sans-serif;">- Driver Parameters -</div>
<div style="position:absolute;left:644px;top:100px;width:147px;height:185px;border:1px solid #ececec;box-sizing:border-box"></div>
<div class="t" style="left:650.4px;top:94.1px;font-size:10.6px;line-height:10.6px;color:#111;font-weight:normal;font-family:'Liberation Sans', sans-serif;background:#acacac;padding:0 2px;margin-left:-2px">V(as) Method</div>
<div class="t" style="left:649.3px;top:110.5px;font-size:10.6px;line-height:10.6px;color:#111;font-weight:normal;font-family:'Liberation Sans', sans-serif;">Piston Diameter</div>
<div class="t" style="right:114.8px;top:127.8px;font-size:11.3px;line-height:11.3px;color:#111;font-weight:normal;font-family:'Liberation Sans', sans-serif;text-align:right;">D =</div>
<div style="position:absolute;left:689px;top:124px;width:50px;height:19px;background:#bfbfbf;border-top:1px solid #6e6e6e;border-left:1px solid #6e6e6e;border-bottom:2px solid #f4f4f4;border-right:2px solid #f4f4f4;box-shadow:inset 1px 1px 0 #a0a0a0;box-sizing:border-box"></div>
<div class="t" style="left:693.0px;top:128.1px;font-size:10.8px;line-height:10.8px;color:#111;font-weight:normal;font-family:'Liberation Sans', sans-serif;">0</div>
<div style="position:absolute;left:742px;top:125.5px;width:41px;height:17px;background:#b8b8b8;border-top:1px solid #aaaaaa;border-left:1px solid #aaaaaa;border-bottom:2px solid #ececec;border-right:2px solid #ececec;box-sizing:border-box"></div>
<div class="t" style="left:744.0px;top:127.9px;font-size:10.8px;line-height:10.8px;color:#111;font-weight:normal;font-family:'Liberation Sans', sans-serif;">inches</div>
<div style="position:absolute;left:652px;top:146.5px;width:11px;height:11px;border-radius:50%;background:radial-gradient(circle at 62% 62%,#ffffff 38%,#e0e0e0 58%,#909090 78%)"></div>
<div style="position:absolute;left:655.5px;top:150.0px;width:4px;height:4px;border-radius:50%;background:#000"></div>
<div class="t" style="left:667.8px;top:147.0px;font-size:10.7px;line-height:10.7px;color:#111;font-weight:normal;font-family:'Liberation Sans', sans-serif;">Test Box Method</div>
<div class="t" style="right:115.5px;top:161.6px;font-size:10.8px;line-height:10.8px;color:#111;font-weight:normal;font-family:'Liberation Sans', sans-serif;text-align:right;">V(B) =</div>
<div style="position:absolute;left:689px;top:159.5px;width:50px;height:18.5px;background:#bfbfbf;border-top:1px solid #6e6e6e;border-left:1px solid #6e6e6e;border-bottom:2px solid #f4f4f4;border-right:2px solid #f4f4f4;box-shadow:inset 1px 1px 0 #a0a0a0;box-sizing:border-box"></div>
<div class="t" style="left:693.0px;top:163.6px;font-size:10.8px;line-height:10.8px;color:#111;font-weight:normal;font-family:'Liberation Sans', sans-serif;">0</div>
<div style="position:absolute;left:742px;top:161.5px;width:41px;height:16px;background:#b8b8b8;border-top:1px solid #aaaaaa;border-left:1px solid #aaaaaa;border-bottom:2px solid #ececec;border-right:2px solid #ececec;box-sizing:border-box"></div>
<div class="t" style="left:744.0px;top:163.9px;font-size:10.8px;line-height:10.8px;color:#111;font-weight:normal;font-family:'Liberation Sans', sans-serif;">cu ft</div>
<div style="position:absolute;left:652px;top:181.5px;width:11px;height:11px;border-radius:50%;background:radial-gradient(circle at 62% 62%,#ffffff 38%,#e0e0e0 58%,#909090 78%)"></div>
<div class="t" style="left:668.1px;top:180.9px;font-size:10.7px;line-height:10.7px;color:#111;font-weight:normal;font-family:'Liberation Sans', sans-serif;">Added Mass Method</div>
<div class="t" style="right:115.5px;top:198.0px;font-size:11.3px;line-height:11.3px;color:#111;font-weight:normal;font-family:'Liberation Sans', sans-serif;text-align:right;">M =</div>
<div style="position:absolute;left:689px;top:194.5px;width:50px;height:18.5px;background:#bfbfbf;border-top:1px solid #6e6e6e;border-left:1px solid #6e6e6e;border-bottom:2px solid #f4f4f4;border-right:2px solid #f4f4f4;box-shadow:inset 1px 1px 0 #a0a0a0;box-sizing:border-box"></div>
<div class="t" style="left:693.0px;top:198.6px;font-size:10.8px;line-height:10.8px;color:#111;font-weight:normal;font-family:'Liberation Sans', sans-serif;">0</div>
<div class="t" style="left:742.7px;top:198.1px;font-size:10.8px;line-height:10.8px;color:#111;font-weight:normal;font-family:'Liberation Sans', sans-serif;">grams</div>
<div style="position:absolute;left:669px;top:214px;width:124px;height:16px;background:#b2b2b2"></div>
<div style="position:absolute;left:670px;top:217px;width:11px;height:11px;border-radius:50%;background:radial-gradient(circle at 62% 62%,#ffffff 38%,#e0e0e0 58%,#909090 78%)"></div>
<div class="t" style="left:685.7px;top:217.0px;font-size:10.3px;line-height:10.3px;color:#111;font-weight:normal;font-family:'Liberation Sans', sans-serif;">Specified SPL Method</div>
<div class="t" style="right:115.5px;top:234.0px;font-size:11.3px;line-height:11.3px;color:#111;font-weight:normal;font-family:'Liberation Sans', sans-serif;text-align:right;">SPL =</div>
<div style="position:absolute;left:689px;top:230px;width:50px;height:19px;background:#bfbfbf;border-top:1px solid #6e6e6e;border-left:1px solid #6e6e6e;border-bottom:2px solid #f4f4f4;border-right:2px solid #f4f4f4;box-shadow:inset 1px 1px 0 #a0a0a0;box-sizing:border-box"></div>
<div class="t" style="left:693.0px;top:234.1px;font-size:10.8px;line-height:10.8px;color:#111;font-weight:normal;font-family:'Liberation Sans', sans-serif;">0</div>
<div style="position:absolute;left:743px;top:232px;width:39px;height:16px;background:#b8b8b8;border-top:1px solid #aaaaaa;border-left:1px solid #aaaaaa;border-bottom:2px solid #ececec;border-right:2px solid #ececec;box-sizing:border-box"></div>
<div class="t" style="left:745.0px;top:234.4px;font-size:10.8px;line-height:10.8px;color:#111;font-weight:normal;font-family:'Liberation Sans', sans-serif;">1W/1m</div>
<div style="position:absolute;left:652px;top:252.5px;width:11px;height:11px;border-radius:50%;background:radial-gradient(circle at 62% 62%,#ffffff 38%,#e0e0e0 58%,#909090 78%)"></div>
<div class="t" style="left:668.0px;top:252.4px;font-size:10.7px;line-height:10.7px;color:#111;font-weight:normal;font-family:'Liberation Sans', sans-serif;">Specified M(md)</div>
<div class="t" style="right:114.5px;top:269.3px;font-size:10.8px;line-height:10.8px;color:#111;font-weight:normal;font-family:'Liberation Sans', sans-serif;text-align:right;">M(md) =</div>
<div style="position:absolute;left:689px;top:266px;width:50px;height:18.5px;background:#bfbfbf;border-top:1px solid #6e6e6e;border-left:1px solid #6e6e6e;border-bottom:2px solid #f4f4f4;border-right:2px solid #f4f4f4;box-shadow:inset 1px 1px 0 #a0a0a0;box-sizing:border-box"></div>
<div class="t" style="left:693.0px;top:270.1px;font-size:10.8px;line-height:10.8px;color:#111;font-weight:normal;font-family:'Liberation Sans', sans-serif;">0</div>
<div class="t" style="left:742.7px;top:269.3px;font-size:10.8px;line-height:10.8px;color:#111;font-weight:normal;font-family:'Liberation Sans', sans-serif;">grams</div>
<div style="position:absolute;left:644px;top:293px;width:147px;height:177px;border:1px solid #ececec;box-sizing:border-box"></div>
<div class="t" style="left:650.5px;top:288.6px;font-size:10.6px;line-height:10.6px;color:#111;font-weight:normal;font-family:'Liberation Sans', sans-serif;background:#acacac;padding:0 2px;margin-left:-2px">Measured Parameters</div>
<div style="position:absolute;left:689px;top:304px;width:50px;height:19.5px;background:#bfbfbf;border-top:1px solid #6e6e6e;border-left:1px solid #6e6e6e;border-bottom:2px solid #f4f4f4;border-right:2px solid #f4f4f4;box-shadow:inset 1px 1px 0 #a0a0a0;box-sizing:border-box"></div>
<div class="t" style="left:693.0px;top:308.1px;font-size:10.8px;line-height:10.8px;color:#111;font-weight:normal;font-family:'Liberation Sans', sans-serif;">0</div>
<div class="t" style="right:115.0px;top:308.1px;font-size:11.3px;line-height:11.3px;color:#111;font-weight:normal;font-family:'Liberation Sans', sans-serif;text-align:right;">R(e) =</div>
<div class="t" style="left:742.8px;top:308.2px;font-size:10.8px;line-height:10.8px;color:#111;font-weight:normal;font-family:'Liberation Sans', sans-serif;">Ohms</div>
<div style="position:absolute;left:689px;top:325px;width:50px;height:19.5px;background:#bfbfbf;border-top:1px solid #6e6e6e;border-left:1px solid #6e6e6e;border-bottom:2px solid #f4f4f4;border-right:2px solid #f4f4f4;box-shadow:inset 1px 1px 0 #a0a0a0;box-sizing:border-box"></div>
<div class="t" style="left:693.0px;top:329.1px;font-size:10.8px;line-height:10.8px;color:#111;font-weight:normal;font-family:'Liberation Sans', sans-serif;">0</div>
<div class="t" style="right:115.0px;top:329.1px;font-size:11.3px;line-height:11.3px;color:#111;font-weight:normal;font-family:'Liberation Sans', sans-serif;text-align:right;">F(s) =</div>
<div class="t" style="left:742.8px;top:329.2px;font-size:10.8px;line-height:10.8px;color:#111;font-weight:normal;font-family:'Liberation Sans', sans-serif;">Hz</div>
<div style="position:absolute;left:689px;top:345.5px;width:50px;height:19.5px;background:#bfbfbf;border-top:1px solid #6e6e6e;border-left:1px solid #6e6e6e;border-bottom:2px solid #f4f4f4;border-right:2px solid #f4f4f4;box-shadow:inset 1px 1px 0 #a0a0a0;box-sizing:border-box"></div>
<div class="t" style="left:693.0px;top:349.6px;font-size:10.8px;line-height:10.8px;color:#111;font-weight:normal;font-family:'Liberation Sans', sans-serif;">0</div>
<div class="t" style="right:115.0px;top:349.6px;font-size:11.3px;line-height:11.3px;color:#111;font-weight:normal;font-family:'Liberation Sans', sans-serif;text-align:right;">Q(ts) =</div>
<div style="position:absolute;left:689px;top:366px;width:50px;height:19.5px;background:#bfbfbf;border-top:1px solid #6e6e6e;border-left:1px solid #6e6e6e;border-bottom:2px solid #f4f4f4;border-right:2px solid #f4f4f4;box-shadow:inset 1px 1px 0 #a0a0a0;box-sizing:border-box"></div>
<div class="t" style="left:693.0px;top:370.1px;font-size:10.8px;line-height:10.8px;color:#111;font-weight:normal;font-family:'Liberation Sans', sans-serif;">0</div>
<div class="t" style="right:115.0px;top:370.1px;font-size:11.3px;line-height:11.3px;color:#111;font-weight:normal;font-family:'Liberation Sans', sans-serif;text-align:right;">Q(es) =</div>
<div style="position:absolute;left:689px;top:387px;width:50px;height:19.5px;background:#bfbfbf;border-top:1px solid #6e6e6e;border-left:1px solid #6e6e6e;border-bottom:2px solid #f4f4f4;border-right:2px solid #f4f4f4;box-shadow:inset 1px 1px 0 #a0a0a0;box-sizing:border-box"></div>
<div class="t" style="left:693.0px;top:391.1px;font-size:10.8px;line-height:10.8px;color:#111;font-weight:normal;font-family:'Liberation Sans', sans-serif;">0</div>
<div class="t" style="right:115.0px;top:391.1px;font-size:11.3px;line-height:11.3px;color:#111;font-weight:normal;font-family:'Liberation Sans', sans-serif;text-align:right;">Q(ms) =</div>
<div style="position:absolute;left:689px;top:408px;width:50px;height:19.5px;background:#bfbfbf;border-top:1px solid #6e6e6e;border-left:1px solid #6e6e6e;border-bottom:2px solid #f4f4f4;border-right:2px solid #f4f4f4;box-shadow:inset 1px 1px 0 #a0a0a0;box-sizing:border-box"></div>
<div class="t" style="left:693.0px;top:412.1px;font-size:10.8px;line-height:10.8px;color:#111;font-weight:normal;font-family:'Liberation Sans', sans-serif;">0</div>
<div class="t" style="right:115.0px;top:412.1px;font-size:11.3px;line-height:11.3px;color:#111;font-weight:normal;font-family:'Liberation Sans', sans-serif;text-align:right;">L(e) =</div>
<div style="position:absolute;left:742.5px;top:412px;width:46px;height:15px;background:#b8b8b8;border-top:1px solid #aaaaaa;border-left:1px solid #aaaaaa;border-bottom:2px solid #ececec;border-right:2px solid #ececec;box-sizing:border-box"></div>
<div class="t" style="left:744.5px;top:414.5px;font-size:10.2px;line-height:10.2px;color:#111;font-weight:normal;font-family:'Liberation Sans', sans-serif;">mH (10k)</div>
<div style="position:absolute;left:689px;top:429px;width:50px;height:19.5px;background:#bfbfbf;border-top:1px solid #6e6e6e;border-left:1px solid #6e6e6e;border-bottom:2px solid #f4f4f4;border-right:2px solid #f4f4f4;box-shadow:inset 1px 1px 0 #a0a0a0;box-sizing:border-box"></div>
<div class="t" style="left:693.0px;top:433.1px;font-size:10.8px;line-height:10.8px;color:#111;font-weight:normal;font-family:'Liberation Sans', sans-serif;">0</div>
<div class="t" style="right:115.0px;top:433.1px;font-size:11.3px;line-height:11.3px;color:#111;font-weight:normal;font-family:'Liberation Sans', sans-serif;text-align:right;">M(ms) =</div>
<div class="t" style="left:742.8px;top:433.2px;font-size:10.8px;line-height:10.8px;color:#111;font-weight:normal;font-family:'Liberation Sans', sans-serif;">grams</div>
<div style="position:absolute;left:689px;top:450px;width:50px;height:19.5px;background:#bfbfbf;border-top:1px solid #6e6e6e;border-left:1px solid #6e6e6e;border-bottom:2px solid #f4f4f4;border-right:2px solid #f4f4f4;box-shadow:inset 1px 1px 0 #a0a0a0;box-sizing:border-box"></div>
<div class="t" style="left:693.0px;top:454.1px;font-size:10.8px;line-height:10.8px;color:#111;font-weight:normal;font-family:'Liberation Sans', sans-serif;">0</div>
<div class="t" style="right:115.0px;top:454.1px;font-size:11.3px;line-height:11.3px;color:#111;font-weight:normal;font-family:'Liberation Sans', sans-serif;text-align:right;">V(as) =</div>
<div style="position:absolute;left:742px;top:451px;width:40px;height:16px;background:#b8b8b8;border-top:1px solid #aaaaaa;border-left:1px solid #aaaaaa;border-bottom:2px solid #ececec;border-right:2px solid #ececec;box-sizing:border-box"></div>
<div class="t" style="left:744.0px;top:453.4px;font-size:10.8px;line-height:10.8px;color:#111;font-weight:normal;font-family:'Liberation Sans', sans-serif;">cu ft</div>
<div style="position:absolute;left:642px;top:477px;width:151px;height:32px;border:1px solid #ececec;box-sizing:border-box"></div>
<div class="t" style="left:651.5px;top:472.2px;font-size:10.6px;line-height:10.6px;color:#111;font-weight:normal;font-family:'Liberation Sans', sans-serif;background:#acacac;padding:0 2px;margin-left:-2px">Test Lead Resistance</div>
<div style="position:absolute;left:689px;top:488.5px;width:49px;height:19.5px;background:#bfbfbf;border-top:1px solid #6e6e6e;border-left:1px solid #6e6e6e;border-bottom:2px solid #f4f4f4;border-right:2px solid #f4f4f4;box-shadow:inset 1px 1px 0 #a0a0a0;box-sizing:border-box"></div>
<div class="t" style="left:693.0px;top:492.6px;font-size:10.8px;line-height:10.8px;color:#111;font-weight:normal;font-family:'Liberation Sans', sans-serif;">0.5268</div>
<div class="t" style="right:115.5px;top:492.8px;font-size:10.8px;line-height:10.8px;color:#111;font-weight:normal;font-family:'Liberation Sans', sans-serif;text-align:right;">R(t) =</div>
<div class="t" style="left:743.0px;top:492.8px;font-size:10.8px;line-height:10.8px;color:#111;font-weight:normal;font-family:'Liberation Sans', sans-serif;">Ohms</div>
<div style="position:absolute;left:8px;top:575px;width:785px;height:20px;background:#c5c5c5;border-top:1px solid #d6d6d6;box-sizing:border-box"></div>
<div class="t" style="left:12.5px;top:582.4px;font-size:10.7px;line-height:10.7px;color:#111;font-weight:normal;font-family:'Liberation Sans', sans-serif;">Ready</div>
<div style="position:absolute;left:534px;top:576px;width:259px;height:19px;background:#c8c8c8"></div>
<div style="position:absolute;left:533px;top:578px;width:1px;height:16px;background:#bcbcbc"></div>
<div class="t" style="left:537.8px;top:581.7px;font-size:11.75px;line-height:11.75px;color:#111;font-weight:normal;font-family:'Liberation Sans', sans-serif;">Showing Workbench | hw=H</div>
<div style="position:absolute;left:688px;top:578px;width:1px;height:16px;background:#a8a8a8"></div>
<div style="position:absolute;left:689px;top:578px;width:1px;height:16px;background:#e2e2e2"></div>
<div style="position:absolute;left:714px;top:578px;width:1px;height:16px;background:#a8a8a8"></div>
<div style="position:absolute;left:715px;top:578px;width:1px;height:16px;background:#e2e2e2"></div>
<div style="position:absolute;left:746px;top:578px;width:1px;height:16px;background:#a8a8a8"></div>
<div style="position:absolute;left:747px;top:578px;width:1px;height:16px;background:#e2e2e2"></div>
<div style="position:absolute;left:776px;top:578px;width:1px;height:16px;background:#a8a8a8"></div>
<div style="position:absolute;left:777px;top:578px;width:1px;height:16px;background:#e2e2e2"></div>
<div class="t" style="left:692.0px;top:581.8px;font-size:10.8px;line-height:10.8px;color:#111;font-weight:normal;font-family:'Liberation Sans', sans-serif;">CAP</div>
<div class="t" style="left:717.5px;top:581.8px;font-size:10.8px;line-height:10.8px;color:#9a9a9a;font-weight:normal;font-family:'Liberation Sans', sans-serif;">NUM</div>
<div class="t" style="left:749.6px;top:581.8px;font-size:10.8px;line-height:10.8px;color:#9a9a9a;font-weight:normal;font-family:'Liberation Sans', sans-serif;">SCRL</div>
<div style="position:absolute;left:789px;top:584px;width:1px;height:1px;background:#fff"></div>
<div style="position:absolute;left:789px;top:587px;width:1px;height:1px;background:#fff"></div>
<div style="position:absolute;left:786px;top:587px;width:1px;height:1px;background:#fff"></div>
<div style="position:absolute;left:789px;top:590px;width:1px;height:1px;background:#fff"></div>
<div style="position:absolute;left:786px;top:590px;width:1px;height:1px;background:#fff"></div>
<div style="position:absolute;left:783px;top:590px;width:1px;height:1px;background:#fff"></div></body></html>
